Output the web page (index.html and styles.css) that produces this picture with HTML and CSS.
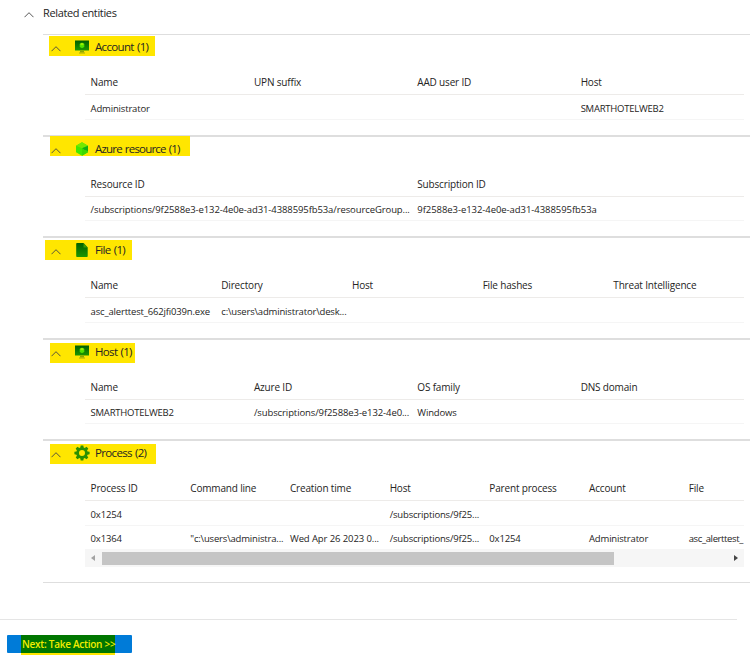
FILE: index.html
```
<!DOCTYPE html>
<html lang="en">
<head>
<meta charset="utf-8">
<title>Related entities</title>
<link rel="stylesheet" href="styles.css">
</head>
<body>
<svg class="defs" width="0" height="0" aria-hidden="true">
  <defs>
    <linearGradient id="green" x1="0" y1="0" x2="0" y2="1"><stop offset="0" stop-color="#005f00"/><stop offset="1" stop-color="#1c9600"/></linearGradient>
    <symbol id="chevron" viewBox="0 0 10 6"><path d="M.5 5.2 5 .7l4.500 4.500" fill="none" stroke="#444" stroke-width=".9"/></symbol>
    <symbol id="monitor" viewBox="0 0 14 14"><path d="M0 .500h14v10H0z" fill="url(#green)"/><path d="M5 10.500h4v2H5z" fill="#8fa800"/><path d="M4 12.500h6v1H4z" fill="#a5ae00"/><path d="M7 2.800 9.300 4.100v2.800L7 8.200 4.700 6.900V4.100z" fill="#4fe000"/><path d="M7 2.800 9.300 4.100 7 5.400 4.700 4.100z" fill="#9cf000"/></symbol>
    <symbol id="cube" viewBox="0 0 14 14"><path d="M7 .300l6 3.400v6.600l-6 3.400-6-3.400V3.700z" fill="#43e800"/><path d="M7 .300l6 3.400L7 6.300 1 3.700z" fill="#74e800"/><path d="M7 6.300l6-2.600v5.500L9.500 8z" fill="#13ae13"/><path d="M7 6.300 9.500 8 13 9.200v1.100l-6 3.400z" fill="#3ad800"/></symbol>
    <symbol id="file" viewBox="0 0 14 14"><path d="M2 0h6.500l4.200 4.400V13.200a.8.8 0 0 1-.8.800H2a.8.8 0 0 1-.8-.8V.800A.8.8 0 0 1 2 0z" fill="url(#green)"/><path d="M8.500 0v4.400h4.200z" fill="#3c9a00"/></symbol>
    <symbol id="gear" viewBox="0 0 16 16"><path fill="#2b9000" fill-rule="evenodd" d="M6.700.500h2.600l.4 2.100 1 .4 1.800-1.200 1.800 1.800L13.100 5.400l.4 1 2.100.4v2.500l-2.100.4-.4 1 1.200 1.800-1.800 1.800-1.800-1.200-1 .4-.4 2.100H6.700l-.4-2.100-1-.4-1.800 1.200-1.800-1.800 1.200-1.800-.4-1-2.100-.4V6.800l2.100-.4.4-1L1.700 3.600l1.800-1.800L5.300 3l1-.4zM8 5a3 3 0 1 0 0 6 3 3 0 0 0 0-6z"/></symbol>
  </defs>
</svg>

<main class="entities">
  <h1 class="heading"><svg class="chevron"><use href="#chevron"/></svg>Related entities</h1>

  <section class="entity">
    <h2 class="title account"><svg class="chevron"><use href="#chevron"/></svg><svg class="icon"><use href="#monitor"/></svg><span>Account (1)</span></h2>
    <div class="table four">
      <div class="row head"><span>Name</span><span>UPN suffix</span><span>AAD user ID</span><span>Host</span></div>
      <div class="row"><span>Administrator</span><span></span><span></span><span class="caps">SMARTHOTELWEB2</span></div>
    </div>
  </section>

  <section class="entity">
    <h2 class="title resource"><svg class="chevron"><use href="#chevron"/></svg><svg class="icon"><use href="#cube"/></svg><span>Azure resource (1)</span></h2>
    <div class="table two">
      <div class="row head"><span>Resource ID</span><span>Subscription ID</span></div>
      <div class="row short"><span class="path">/subscriptions/9f2588e3-e132-4e0e-ad31-4388595fb53a/resourceGroup...</span><span class="guid">9f2588e3-e132-4e0e-ad31-4388595fb53a</span></div>
    </div>
  </section>

  <section class="entity">
    <h2 class="title file"><svg class="chevron"><use href="#chevron"/></svg><svg class="icon"><use href="#file"/></svg><span>File (1)</span></h2>
    <div class="table five">
      <div class="row head"><span>Name</span><span>Directory</span><span>Host</span><span>File hashes</span><span>Threat Intelligence</span></div>
      <div class="row"><span>asc_alerttest_662jfi039n.exe</span><span>c:\users\administrator\desk...</span><span></span><span></span><span></span></div>
    </div>
  </section>

  <section class="entity">
    <h2 class="title host"><svg class="chevron"><use href="#chevron"/></svg><svg class="icon"><use href="#monitor"/></svg><span>Host (1)</span></h2>
    <div class="table four">
      <div class="row head"><span>Name</span><span>Azure ID</span><span>OS family</span><span>DNS domain</span></div>
      <div class="row short"><span class="caps">SMARTHOTELWEB2</span><span class="path">/subscriptions/9f2588e3-e132-4e0...</span><span>Windows</span><span></span></div>
    </div>
  </section>

  <section class="entity">
    <h2 class="title process"><svg class="chevron"><use href="#chevron"/></svg><svg class="icon"><use href="#gear"/></svg><span>Process (2)</span></h2>
    <div class="table seven">
      <div class="row head"><span>Process ID</span><span>Command line</span><span>Creation time</span><span>Host</span><span>Parent process</span><span>Account</span><span>File</span></div>
      <div class="row"><span>0x1254</span><span></span><span></span><span>/subscriptions/9f25...</span><span></span><span></span><span></span></div>
      <div class="row last"><span>0x1364</span><span>"c:\users\administra...</span><span class="path">Wed Apr 26 2023 0...</span><span>/subscriptions/9f25...</span><span>0x1254</span><span>Administrator</span><span class="edge">asc_alerttest_</span></div>
      <div class="scrollbar"><i class="arrow left"></i><i class="thumb"></i><i class="arrow right"></i></div>
    </div>
  </section>
</main>

<footer class="footer"><button class="next"><span>Next: Take Action &gt;&gt;</span></button></footer>
</body>
</html>
```
FILE: styles.css
```
* { box-sizing: border-box; }
body {
  margin: 0;
  height: 655px;
  overflow: hidden;
  background: #fff;
  color: #252423;
  font-family: "Open Sans", "Noto Sans", sans-serif;
}
.defs { display: block; }
h1, h2 { margin: 0; font-weight: 400; }
.entities { width: 750px; padding-left: 43px; }
.heading {
  display: flex;
  align-items: center;
  height: 34px;
  margin-left: -19px;
  padding-bottom: 9px;
  font-size: 11px;
  letter-spacing: -.36px;
}
.chevron { width: 10px; height: 6px; flex: none; }
.heading .chevron { margin: 4px 9px 0 0; }
.entity { border-top: 2px solid #dedede; padding-bottom: 15px; }
.entity:first-of-type { border-top-width: 1px; }
.entity:last-child { border-bottom: 1px solid #dedede; }
.title {
  position: relative;
  display: flex;
  align-items: center;
  height: 24px;
  margin-bottom: 10px;
  padding-left: 8px;
  font-size: 11.5px;
  letter-spacing: -.66px;
  word-spacing: .8px;
}
.title > * { position: relative; }
.title span { padding-bottom: 1px; }
.title.resource { letter-spacing: -.8px; }
.title .chevron { margin: 3px 14px 0 0; }
.icon { width: 14px; height: 14px; margin-right: 6px; }
.process .icon { width: 16px; height: 16px; margin: 0 5px 0 -1px; }
/* Marker stroke behind each section title */
.title::before { content: ""; position: absolute; height: 20px; background: #ffe600; }
.account::before { left: 6px; top: 1px; width: 106px; }
.resource::before { left: 7px; top: -1px; width: 140px; }
.file::before { left: 2px; top: 2px; width: 87px; }
.host::before { left: 7px; top: 3px; width: 85px; }
.process::before { left: 7px; top: 3px; width: 106px; }

.table { margin: 0 6px 0 42px; overflow: hidden; }
.row {
  display: grid;
  align-items: center;
  height: 25px;
  padding: 2px 0 0 5.6px;
  border-bottom: 1px solid #f5f5f5;
  font-size: 9.5px;
  letter-spacing: -.17px;
  white-space: nowrap;
}
.row.short { height: 24px; }
.row.head { height: 26px; padding-top: 0; border-color: #edebe9; font-size: 10px; }
.row.last { height: 23px; border: 0; }
.two .row { grid-template-columns: repeat(2, 1fr); }
.four .row { grid-template-columns: repeat(4, 1fr); }
.five .row { grid-template-columns: repeat(5, 1fr); }
.seven .row { grid-template-columns: repeat(7, 99.7px); }
.row span { min-width: 0; }
.caps { letter-spacing: -.24px; }
.path { letter-spacing: -.1px; }
.guid { letter-spacing: -.06px; }
.edge { letter-spacing: -.38px; }

.scrollbar { display: flex; align-items: center; height: 18px; padding: 0 6px; background: #f6f6f6; }
.arrow { border: 3px solid transparent; }
.arrow.left { border-left-width: 0; border-right: 4px solid #a3a3a3; margin-right: 7px; }
.arrow.right { border-right-width: 0; border-left: 4px solid #454545; margin-left: auto; }
.thumb { width: 512px; height: 13px; background: #c5c5c5; }

.footer { width: 737px; margin-top: 36px; padding: 15px 0 0 7px; border-top: 1px solid #e5e5e5; }
.next {
  position: relative;
  display: block;
  width: 125px;
  height: 18px;
  padding: 0;
  border: 0;
  border-radius: 1px;
  background: #007bd8;
  color: #f2ed00;
  font: 600 10px "Open Sans", "Noto Sans", sans-serif;
}
.next::before {
  content: "";
  position: absolute;
  left: 14px;
  top: 0;
  width: 94px;
  height: 20px;
  background: linear-gradient(#007600 18px, #ffe600 18px);
}
.next span { position: relative; display: block; padding-left: 15px; text-align: left; letter-spacing: -.27px; white-space: nowrap; }
```
